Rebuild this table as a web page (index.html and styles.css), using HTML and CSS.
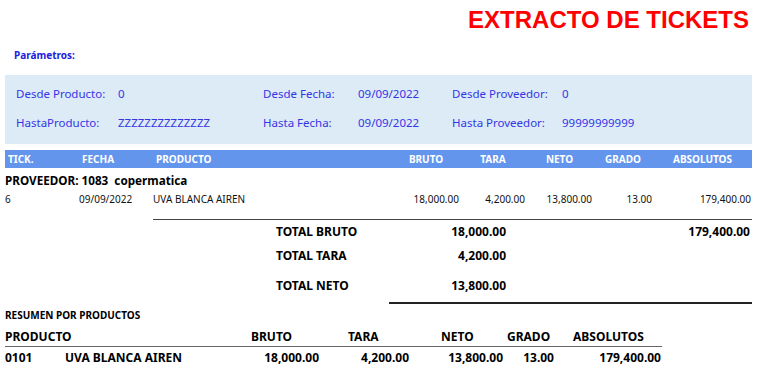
FILE: index.html
```html
<!DOCTYPE html>
<html lang="es">
<head>
<meta charset="utf-8">
<title>Extracto de tickets</title>
<link rel="stylesheet" href="styles.css">
</head>
<body>
<div class="page">
  <header class="top">
    <h1 class="title">EXTRACTO DE TICKETS</h1>
  </header>
  <div class="params-label">Parámetros:</div>
  <section class="params">
    <span>Desde Producto:</span><span>0</span>
    <span>Desde Fecha:</span><span>09/09/2022</span>
    <span>Desde Proveedor:</span><span>0</span>
    <span>HastaProducto:</span><span>ZZZZZZZZZZZZZZ</span>
    <span>Hasta Fecha:</span><span>09/09/2022</span>
    <span>Hasta Proveedor:</span><span>99999999999</span>
  </section>

  <div class="thead grid8">
    <span class="l">TICK.</span><span class="l">FECHA</span><span class="l">PRODUCTO</span>
    <span class="c">BRUTO</span><span class="c">TARA</span><span class="c">NETO</span><span class="c">GRADO</span><span class="c">ABSOLUTOS</span>
  </div>
  <div class="prov">PROVEEDOR: 1083&nbsp; copermatica</div>
  <div class="row grid8">
    <span>6</span><span>09/09/2022</span><span>UVA BLANCA AIREN</span>
    <span class="r">18,000.00</span><span class="r">4,200.00</span><span class="r">13,800.00</span><span class="r">13.00</span><span class="r">179,400.00</span>
  </div>

  <div class="totals">
    <div class="trow"><span class="tl">TOTAL BRUTO</span><span class="tv">18,000.00</span><span class="tv2">179,400.00</span></div>
    <div class="trow"><span class="tl">TOTAL TARA</span><span class="tv">4,200.00</span><span></span></div>
    <div class="trow"><span class="tl">TOTAL NETO</span><span class="tv">13,800.00</span><span></span></div>
  </div>

  <div class="resumen-title">RESUMEN POR PRODUCTOS</div>
  <div class="shead">
    <span>PRODUCTO</span><span>BRUTO</span><span>TARA</span><span>NETO</span><span>GRADO</span><span>ABSOLUTOS</span>
  </div>
  <div class="srow">
    <span>0101</span><span>UVA BLANCA AIREN</span>
    <span class="r">18,000.00</span><span class="r">4,200.00</span><span class="r">13,800.00</span><span class="r">13.00</span><span class="r">179,400.00</span>
  </div>
</div>
</body>
</html>
```
FILE: styles.css
```css
* { box-sizing: border-box; margin: 0; padding: 0; }
html, body { background: #fff; }
body { font-family: "Noto Sans", "Open Sans", sans-serif; color: #000; }
.page { width: 767px; height: 390px; overflow: hidden; }

.top { display: flex; justify-content: flex-end; padding: 6px 18px 0 0; height: 40px; }
.title { font-family: "Liberation Sans", Arial, sans-serif; font-weight: bold; font-size: 24px; line-height: 28px; color: #ff0000; }

.params-label { font-size: 10px; font-weight: bold; color: #2020e0; padding-left: 14px; line-height: 16px; margin-top: 7px; }

.params {
  margin: 12px 15px 0 5px;
  background: #dcebf6;
  height: 69px;
  display: grid;
  grid-template-columns: 102px 145px 95px 94px 110px 1fr;
  grid-auto-rows: 29px;
  align-content: start;
  padding: 4px 0 0 11px;
  font-size: 11.5px;
  color: #3535e6;
}
.params span { line-height: 29px; white-space: nowrap; }

.grid8 { display: grid; grid-template-columns: 74px 74px 239px 68px 66px 67px 60px 99px; margin-left: 5px; width: 747px; }
.thead { margin-top: 6px; background: #6495ed; height: 18px; align-items: center; color: #fff; font-weight: bold; font-size: 10px; line-height: 18px; }
.thead .l { padding-left: 3px; }
.thead .c { text-align: center; }

.prov { font-weight: bold; font-size: 11.7px; line-height: 24px; padding-left: 5px; }
.row { font-size: 10px; line-height: 14px; color: #111; }
.row .r { text-align: right; padding-right: 1px; }

.totals { margin: 13px 15px 0 153px; border-top: 1.5px solid #444; }
.trow { display: grid; grid-template-columns: 113px 117px 1fr; padding-left: 123px; align-items: center; height: 26px; font-weight: bold; font-size: 12px; }
.trow:first-child { height: 22px; }
.trow:last-child { height: 34px; }
.tv { text-align: right; }
.tv2 { text-align: right; padding-right: 2px; }

.totals::after { content: ""; display: block; margin-left: 236px; border-bottom: 2px solid #222; }

.resumen-title { font-size: 10px; font-weight: bold; padding-left: 5px; margin-top: 4px; line-height: 14px; }

.shead { display: grid; grid-template-columns: 246px 97px 93px 66px 66px 1fr; margin: 6px 0 0 5px; width: 657px; font-weight: bold; font-size: 12px; line-height: 18px; border-bottom: 1.5px solid #666; }
.srow { display: grid; grid-template-columns: 60px 185px 69px 90px 94px 51px 107px; margin-left: 5px; width: 657px; font-weight: bold; font-size: 12px; line-height: 22px; }
.srow .r { text-align: right; }
```
